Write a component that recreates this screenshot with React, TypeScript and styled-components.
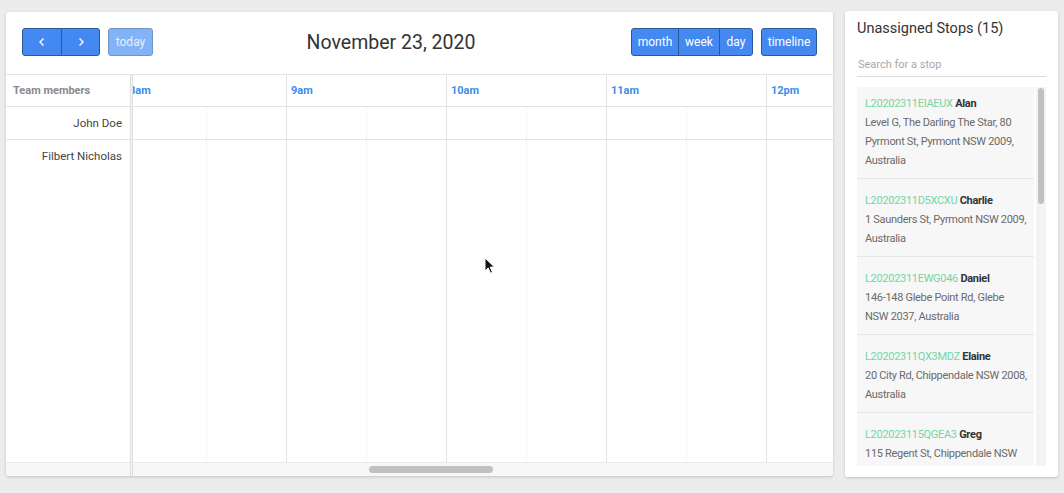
import React from 'react';
import styled, { createGlobalStyle } from 'styled-components';

const GlobalStyle = createGlobalStyle`
  html, body {
    margin: 0;
    padding: 0;
    background: #ececec;
    font-family: Roboto, "Liberation Sans", Arial, sans-serif;
  }
  * { box-sizing: border-box; }
`;

const HOUR_WIDTH = 160;
const HOURS = ['8am', '9am', '10am', '11am', '12pm', '1pm', '2pm'];

const stops = [
  { code: 'L20202311EIAEUX', name: 'Alan', address: 'Level G, The Darling The Star, 80 Pyrmont St, Pyrmont NSW 2009, Australia' },
  { code: 'L20202311D5XCXU', name: 'Charlie', address: '1 Saunders St, Pyrmont NSW 2009, Australia' },
  { code: 'L20202311EWG046', name: 'Daniel', address: '146-148 Glebe Point Rd, Glebe NSW 2037, Australia' },
  { code: 'L20202311QX3MDZ', name: 'Elaine', address: '20 City Rd, Chippendale NSW 2008, Australia' },
  { code: 'L202023115QGEA3', name: 'Greg', address: '115 Regent St, Chippendale NSW 2008, Australia' },
];

const Page = styled.div`
  position: relative;
  display: flex;
  gap: 12px;
  padding: 11px 6px 0 6px;
  height: 493px;
`;

const Card = styled.div`
  background: #fff;
  border-radius: 3px;
  box-shadow: 0 1px 3px rgba(0, 0, 0, 0.18);
  display: flex;
  flex-direction: column;
  overflow: hidden;
`;

const CalendarCard = styled(Card)`
  width: 827px;
  height: 464px;
  margin-top: 1px;
`;

const Toolbar = styled.div`
  display: flex;
  justify-content: space-between;
  align-items: center;
  height: 62px;
  padding: 0 16px 2px 16px;
`;

const ButtonRow = styled.div`
  display: flex;
  gap: 8px;
`;

const ButtonGroup = styled.div`
  display: flex;
  & > button {
    border-radius: 0;
  }
  & > button + button {
    margin-left: -1px;
  }
  & > button:first-child {
    border-radius: 3px 0 0 3px;
  }
  & > button:last-child {
    border-radius: 0 3px 3px 0;
  }
`;

const Button = styled.button<{ $disabled?: boolean; $width?: number }>`
  height: 28px;
  width: ${(p) => (p.$width ? `${p.$width}px` : 'auto')};
  padding: 0 6px;
  display: flex;
  align-items: center;
  justify-content: center;
  font-family: Roboto, "Liberation Sans", Arial, sans-serif;
  font-size: 12px;
  color: ${(p) => (p.$disabled ? '#e6efff' : '#fff')};
  background: ${(p) => (p.$disabled ? '#82b3f6' : '#4489f2')};
  border: 1px solid ${(p) => (p.$disabled ? '#7293c4' : '#2d5896')};
  border-radius: 3px;
  cursor: pointer;
`;

const Title = styled.h2`
  margin: 0 0 0 -2px;
  font-size: 19.5px;
  font-weight: 400;
  color: #333;
`;

const Grid = styled.div`
  flex: 1;
  display: flex;
  border-top: 1px solid #e4e4e4;
  min-height: 0;
`;

const ResourcePane = styled.div`
  width: 124px;
  display: flex;
  flex-direction: column;
`;

const ResourceHeader = styled.div`
  height: 32px;
  border-bottom: 1px solid #e4e4e4;
  display: flex;
  align-items: center;
  padding-left: 7px;
  font-size: 11px;
  font-weight: 700;
  color: #8a8a8a;
`;

const ResourceRow = styled.div<{ $grow?: boolean }>`
  height: ${(p) => (p.$grow ? 'auto' : '33px')};
  flex: ${(p) => (p.$grow ? 1 : 'none')};
  border-bottom: ${(p) => (p.$grow ? 'none' : '1px solid #e4e4e4')};
  padding: 9px 8px 0 0;
  text-align: right;
  font-size: 11.5px;
  line-height: 15px;
  color: #444;
`;

const ScrollStrip = styled.div`
  height: 14px;
  flex: none;
  background: #f7f7f8;
  border-top: 1px solid #ebebeb;
  display: flex;
  align-items: center;
`;

const Divider = styled.div`
  width: 3px;
  flex: none;
  border-left: 1px solid #dedede;
  border-right: 1px solid #dedede;
  background: #f5f5f5;
`;

const TimelinePane = styled.div`
  flex: 1;
  min-width: 0;
  display: flex;
  flex-direction: column;
`;

const TimelineViewport = styled.div`
  flex: 1;
  overflow: hidden;
`;

const TimelineInner = styled.div`
  margin-left: -7px;
  width: ${HOURS.length * HOUR_WIDTH}px;
  height: 100%;
  display: flex;
  flex-direction: column;
`;

const HeaderRow = styled.div`
  height: 32px;
  display: flex;
  border-bottom: 1px solid #e4e4e4;
`;

const HourCell = styled.div<{ $first?: boolean }>`
  width: ${HOUR_WIDTH}px;
  flex: none;
  border-left: 1px solid #e4e4e4;
  display: flex;
  align-items: center;
  padding-left: ${(p) => (p.$first ? 2 : 4)}px;
  font-size: 11px;
  font-weight: 700;
  color: #3c8ee6;
`;

const BodyRow = styled.div<{ $grow?: boolean }>`
  height: ${(p) => (p.$grow ? 'auto' : '33px')};
  flex: ${(p) => (p.$grow ? 1 : 'none')};
  display: flex;
  border-bottom: ${(p) => (p.$grow ? 'none' : '1px solid #e4e4e4')};
`;

const SlotCell = styled.div<{ $half?: boolean }>`
  width: ${HOUR_WIDTH / 2}px;
  flex: none;
  border-left: 1px ${(p) => (p.$half ? 'dotted #ececec' : 'solid #e4e4e4')};
`;

const ScrollThumb = styled.div<{ $offset: number; $size: number }>`
  margin-left: ${(p) => p.$offset}px;
  width: ${(p) => p.$size}px;
  height: 7px;
  border-radius: 4px;
  background: #c1c1c1;
`;

const SideCard = styled(Card)`
  width: 213px;
  height: 466px;
  padding: 0 12px 11px 12px;
`;

const SideTitle = styled.h3`
  margin: 8px 0 0 0;
  font-size: 14.5px;
  line-height: 20px;
  font-weight: 400;
  color: #333;
`;

const SearchInput = styled.input`
  margin-top: 15px;
  height: 23px;
  width: 100%;
  border: none;
  border-bottom: 1px solid #dcdcdc;
  padding: 0 1px 2px 1px;
  font-family: Roboto, "Liberation Sans", Arial, sans-serif;
  font-size: 11px;
  color: #333;
  outline: none;
  &::placeholder {
    color: #a8a8a8;
  }
`;

const StopList = styled.div`
  margin-top: 10px;
  flex: 1;
  min-height: 0;
  display: flex;
  gap: 2px;
`;

const StopViewport = styled.div`
  width: 177px;
  flex: none;
  overflow: hidden;
`;

const StopScroll = styled.div`
  margin-top: -5px;
`;

const StopItem = styled.div`
  background: #f7f7f8;
  border-bottom: 1px solid #e6e6e8;
  padding: 12px 6px 8px 8px;
  font-size: 11px;
  line-height: 19px;
  letter-spacing: -0.3px;
  color: #6a6a6a;
`;

const StopCode = styled.span`
  color: #72d6a2;
`;

const StopName = styled.span`
  color: #333;
  font-weight: 700;
`;

const ListTrack = styled.div`
  width: 10px;
  flex: none;
  background: #f3f3f3;
  padding: 1px 2px;
`;

const ListThumb = styled.div`
  height: 116px;
  border-radius: 3px;
  background: #c1c1c1;
`;

const Pointer = styled.svg`
  position: absolute;
  left: 484px;
  top: 257px;
  pointer-events: none;
`;

function Timeline({ rows }: { rows: { grow?: boolean }[] }) {
  return (
    <TimelineInner>
      <HeaderRow>
        {HOURS.map((h, i) => (
          <HourCell key={h} $first={i === 0}>{h}</HourCell>
        ))}
      </HeaderRow>
      {rows.map((r, i) => (
        <BodyRow key={i} $grow={r.grow}>
          {HOURS.flatMap((h) => [
            <SlotCell key={h + 'a'} />,
            <SlotCell key={h + 'b'} $half />,
          ])}
        </BodyRow>
      ))}
    </TimelineInner>
  );
}

export default function App() {
  return (
    <>
      <GlobalStyle />
      <Page>
        <CalendarCard>
          <Toolbar>
            <ButtonRow>
              <ButtonGroup>
                <Button $width={40} aria-label="prev">
                  <svg width="12" height="12" viewBox="0 0 12 12">
                    <path d="M7.5 2.5 4 6l3.5 3.5" fill="none" stroke="#fff" strokeWidth="1.4" />
                  </svg>
                </Button>
                <Button $width={39} aria-label="next">
                  <svg width="12" height="12" viewBox="0 0 12 12">
                    <path d="M4.5 2.5 8 6 4.5 9.5" fill="none" stroke="#fff" strokeWidth="1.4" />
                  </svg>
                </Button>
              </ButtonGroup>
              <Button $disabled $width={45}>today</Button>
            </ButtonRow>
            <Title>November 23, 2020</Title>
            <ButtonRow>
              <ButtonGroup>
                <Button $width={48}>month</Button>
                <Button $width={42}>week</Button>
                <Button $width={34}>day</Button>
              </ButtonGroup>
              <Button $width={56}>timeline</Button>
            </ButtonRow>
          </Toolbar>
          <Grid>
            <ResourcePane>
              <ResourceHeader>Team members</ResourceHeader>
              <ResourceRow>John Doe</ResourceRow>
              <ResourceRow $grow>Filbert Nicholas</ResourceRow>
              <ScrollStrip />
            </ResourcePane>
            <Divider />
            <TimelinePane>
              <TimelineViewport>
                <Timeline rows={[{}, { grow: true }]} />
              </TimelineViewport>
              <ScrollStrip>
                <ScrollThumb $offset={236} $size={124} />
              </ScrollStrip>
            </TimelinePane>
          </Grid>
        </CalendarCard>

        <SideCard>
          <SideTitle>Unassigned Stops (15)</SideTitle>
          <SearchInput placeholder="Search for a stop" />
          <StopList>
            <StopViewport>
              <StopScroll>
                {stops.map((s) => (
                  <StopItem key={s.code}>
                    <StopCode>{s.code}</StopCode> <StopName>{s.name}</StopName>
                    <div>{s.address}</div>
                  </StopItem>
                ))}
              </StopScroll>
            </StopViewport>
            <ListTrack>
              <ListThumb />
            </ListTrack>
          </StopList>
        </SideCard>

        <Pointer width="12" height="18" viewBox="0 0 12 18">
          <path d="M1 1v13l3.2-3.1 2.3 5.3 2-0.9-2.3-5.2H10.5z" fill="#111" stroke="#fff" strokeWidth="1" />
        </Pointer>
      </Page>
    </>
  );
}
